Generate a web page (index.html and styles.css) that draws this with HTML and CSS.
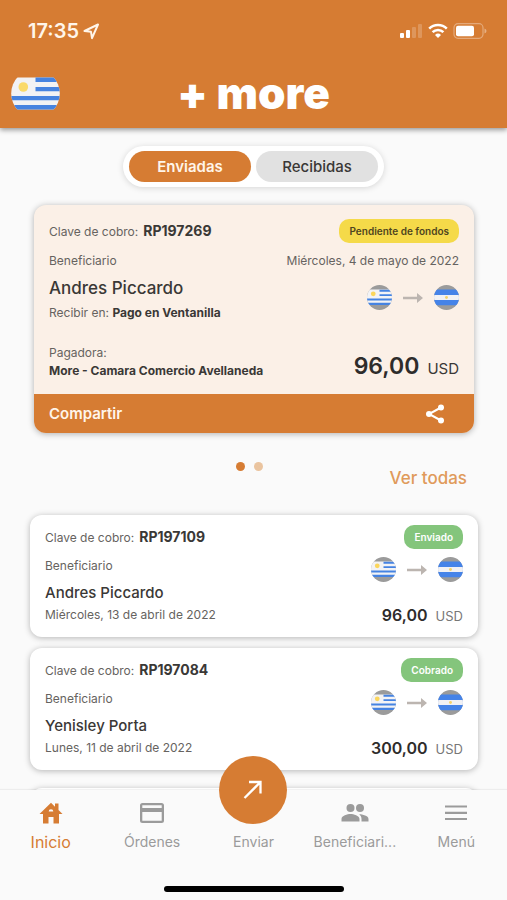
FILE: index.html
```html
<!DOCTYPE html>
<html lang="es">
<head>
<meta charset="utf-8">
<meta name="viewport" content="width=device-width, initial-scale=1">
<title>+ more</title>
<link rel="stylesheet" href="styles.css">
</head>
<body>
<svg class="defs" aria-hidden="true">
  <defs>
    <clipPath id="round"><circle cx="13" cy="13" r="13"/></clipPath>
    <symbol id="flag-uy" viewBox="0 0 26 26">
      <g clip-path="url(#round)">
        <path fill="#9b9b9b" d="M0 0h26v26H0z"/>
        <path fill="#f3f3f5" d="M0 4.700h26v16.200H0z"/>
        <path fill="#4583e2" d="M13 5h13v2H13zM13 9.500h13v2H13zM0 14h26v2.200H0zM0 18.500h26v2.300H0z"/>
        <circle cx="6.500" cy="9.200" r="2.500" fill="#fbd65c"/>
      </g>
    </symbol>
    <symbol id="flag-ar" viewBox="0 0 26 26">
      <g clip-path="url(#round)">
        <path fill="#9b9b9b" d="M0 0h26v26H0z"/>
        <path fill="#4583e8" d="M0 4.700h26v16.300H0z"/>
        <path fill="#f1f1f4" d="M0 10.500h26v5H0z"/>
        <circle cx="13" cy="13" r="1.500" fill="#f5d36b"/>
      </g>
    </symbol>
    <symbol id="arrow" viewBox="0 0 20 12">
      <path d="M0 4.800h14V1l6 5-6 5V7.200H0z" fill="currentColor"/>
    </symbol>
  </defs>
</svg>

<header class="header">
  <div class="status">
    <div class="status-time">17:35
      <svg width="17" height="17" viewBox="0 0 17 17" aria-hidden="true"><path d="M1.500 8 15 1.500 9 15.200 8 8.800z" fill="none" stroke="#fff5ea" stroke-width="2" stroke-linejoin="round"/></svg>
    </div>
    <div class="status-icons">
      <svg width="24" height="16" viewBox="0 0 24 16" aria-hidden="true"><g fill="#fff"><rect x="1" y="10" width="4" height="5" rx="1"/><rect x="7" y="7" width="4" height="8" rx="1"/><g opacity=".2"><rect x="13" y="4" width="4" height="11" rx="1"/><rect x="19" y="1" width="4" height="14" rx="1"/></g></g></svg>
      <svg width="20" height="16" viewBox="0 0 20 16" aria-hidden="true"><g fill="none" stroke="#fff" stroke-width="2.500"><path d="M1.200 5.600a12.500 12.500 0 0 1 17.600 0"/><path d="M4.600 9.200a7.600 7.600 0 0 1 10.800 0"/></g><path d="M10 15 7 12a4.300 4.300 0 0 1 6 0z" fill="#fff"/></svg>
      <svg width="34" height="16" viewBox="0 0 34 16" aria-hidden="true"><rect x="1" y=".7" width="29" height="14.600" rx="4" fill="none" stroke="#fff" stroke-opacity=".35" stroke-width="1.200"/><rect x="3" y="2.700" width="18" height="10.600" rx="2" fill="#fff"/><path d="M31.500 5.500q2 .8 2 2.500t-2 2.500z" fill="#fff" opacity=".4"/></svg>
    </div>
  </div>
  <div class="brand-row">
    <svg class="country" viewBox="0 0 49 33" role="img" aria-label="Uruguay">
      <clipPath id="country-clip"><circle cx="24.500" cy="16.500" r="24.300"/></clipPath>
      <g clip-path="url(#country-clip)">
        <path fill="#f2f2f4" d="M0 .5h49v32H0z"/>
        <path fill="#4683e0" d="M24.500.500H49v4.500H24.500zM24.500 10H49v4.300H24.500zM0 19h49v4.300H0zM0 28h49v4.500H0z"/>
        <circle cx="12.300" cy="10" r="4.800" fill="#fada6a"/>
      </g>
    </svg>
    <h1 class="brand">+ more</h1>
  </div>
</header>

<main class="main">
  <div class="toggle">
    <button class="toggle-btn active" type="button">Enviadas</button>
    <button class="toggle-btn" type="button">Recibidas</button>
  </div>

  <article class="feature">
    <div class="feature-body">
      <div class="row">
        <p class="key">Clave de cobro: <b>RP197269</b></p>
        <span class="badge pending">Pendiente de fondos</span>
      </div>
      <div class="row second">
        <p class="small">Beneficiario</p>
        <p class="small">Miércoles, 4 de mayo de 2022</p>
      </div>
      <div class="row third">
        <div>
          <h2 class="name">Andres Piccardo</h2>
          <p class="small">Recibir en: <b>Pago en Ventanilla</b></p>
        </div>
        <div class="route">
          <svg class="flag"><use href="#flag-uy"/></svg>
          <svg class="arrow"><use href="#arrow"/></svg>
          <svg class="flag"><use href="#flag-ar"/></svg>
        </div>
      </div>
      <div class="row fourth">
        <div>
          <p class="small">Pagadora:</p>
          <p class="small"><b>More - Camara Comercio Avellaneda</b></p>
        </div>
        <p class="amount"><strong>96,00</strong> <span>USD</span></p>
      </div>
    </div>
    <button class="share" type="button">Compartir
      <svg width="20" height="20" viewBox="0 0 20 20" aria-hidden="true"><path d="M16 3.500 4 10l12 6.500" fill="none" stroke="#fff" stroke-width="2"/><g fill="#fff"><circle cx="16" cy="3.500" r="3"/><circle cx="4" cy="10" r="3"/><circle cx="16" cy="16.500" r="3"/></g></svg>
    </button>
  </article>

  <div class="pager">
    <div class="dots"><span class="dot on"></span><span class="dot"></span></div>
    <a class="all" href="#todas">Ver todas</a>
  </div>

  <section class="list">
    <article class="item">
      <div class="row">
        <p class="key">Clave de cobro: <b>RP197109</b></p>
        <span class="badge done">Enviado</span>
      </div>
      <div class="row details">
        <div>
          <p class="small">Beneficiario</p>
          <h3 class="name">Andres Piccardo</h3>
          <p class="small">Miércoles, 13 de abril de 2022</p>
        </div>
        <div class="side">
          <div class="route">
            <svg class="flag"><use href="#flag-uy"/></svg>
            <svg class="arrow"><use href="#arrow"/></svg>
            <svg class="flag"><use href="#flag-ar"/></svg>
          </div>
          <p class="amount"><strong>96,00</strong> <span>USD</span></p>
        </div>
      </div>
    </article>
    <article class="item">
      <div class="row">
        <p class="key">Clave de cobro: <b>RP197084</b></p>
        <span class="badge done">Cobrado</span>
      </div>
      <div class="row details">
        <div>
          <p class="small">Beneficiario</p>
          <h3 class="name">Yenisley Porta</h3>
          <p class="small">Lunes, 11 de abril de 2022</p>
        </div>
        <div class="side">
          <div class="route">
            <svg class="flag"><use href="#flag-uy"/></svg>
            <svg class="arrow"><use href="#arrow"/></svg>
            <svg class="flag"><use href="#flag-ar"/></svg>
          </div>
          <p class="amount"><strong>300,00</strong> <span>USD</span></p>
        </div>
      </div>
    </article>
    <div class="item next"></div>
  </section>
</main>

<nav class="nav">
  <div class="tabs">
    <a class="tab current" href="#inicio">
      <svg width="24" height="24" viewBox="0 0 24 24" aria-hidden="true"><path d="M19.500 9V2.500H16v3.300L12 1.800.500 13H4v9.500h5.500V16h5v6.500H20V13h3.500zM9.700 10.500a2.300 2.300 0 0 1 4.600 0z" fill="currentColor" fill-rule="evenodd"/></svg>
      <span>Inicio</span>
    </a>
    <a class="tab" href="#ordenes">
      <svg width="26" height="24" viewBox="0 0 26 24" aria-hidden="true"><path d="M3.500 2h19A2.500 2.500 0 0 1 25 4.500v15a2.500 2.500 0 0 1-2.500 2.500h-19A2.500 2.500 0 0 1 1 19.500v-15A2.500 2.500 0 0 1 3.500 2zM3.300 4.300v2.700h19.400V4.300zM3.300 11v8.700h19.400V11z" fill="currentColor" fill-rule="evenodd"/></svg>
      <span>Órdenes</span>
    </a>
    <a class="tab send" href="#enviar">
      <span class="fab"><svg width="22" height="22" viewBox="0 0 22 22" aria-hidden="true"><path d="M2.500 19 18 3.500M7 3h11.500v11.500" fill="none" stroke="#fff" stroke-width="2.300"/></svg></span>
      <span>Enviar</span>
    </a>
    <a class="tab" href="#beneficiarios">
      <svg width="28" height="24" viewBox="0 0 28 24" aria-hidden="true"><g fill="currentColor"><circle cx="9.500" cy="7" r="4"/><circle cx="19" cy="7" r="4"/><path d="M.500 20.500v-2.500c0-3.300 6-5 9-5s9 1.700 9 5v2.500zM20.500 20.500v-2.500c0-2-.900-3.500-2.300-4.700 3.200 0 9.300 1.500 9.300 4.700v2.500z"/></g></svg>
      <span>Beneficiari...</span>
    </a>
    <a class="tab" href="#menu">
      <svg width="24" height="24" viewBox="0 0 24 24" aria-hidden="true"><path d="M1 5.500h22M1 11.800h22M1 18h22" stroke="currentColor" stroke-width="2.200"/></svg>
      <span>Menú</span>
    </a>
  </div>
  <div class="home-bar"></div>
</nav>
</body>
</html>
```
FILE: styles.css
```css
:root {
  --orange: #d67c33;
  --ink: #3a3836;
  --soft: #666360;
  --grey: #9b9b9b;
}

* { box-sizing: border-box; }

body {
  margin: 0;
  height: 100vh;
  display: flex;
  flex-direction: column;
  overflow: hidden;
  background: #fafafa;
  color: var(--ink);
  font-family: Inter, "Liberation Sans", sans-serif;
}

h1, h2, h3, p { margin: 0; }
svg { display: block; flex: none; }
a { text-decoration: none; }
button { border: 0; font: inherit; cursor: pointer; }
b { font-weight: 700; color: var(--ink); }
.defs { position: absolute; width: 0; height: 0; }

/* Header */
.header {
  position: relative;
  z-index: 1;
  flex: none;
  background: var(--orange);
  box-shadow: 0 2px 5px rgba(0, 0, 0, .4);
}

.status {
  height: 62px;
  padding: 0 20px 0 28px;
  display: flex;
  align-items: center;
  justify-content: space-between;
  color: #fff5ea;
}

.status-time {
  display: flex;
  align-items: center;
  gap: 4px;
  font-size: 20px;
  font-weight: 600;
}

.status-icons { display: flex; gap: 5px; }

.brand-row {
  height: 66px;
  padding: 0 11px 4px;
  display: grid;
  grid-template-columns: 1fr auto 1fr;
  align-items: center;
}

.country { width: 49px; height: 33px; }

.brand {
  color: #fff;
  font-size: 44px;
  line-height: 56px;
  font-weight: 900;
}

/* Main */
.main {
  flex: 1;
  min-height: 0;
  overflow: hidden;
}

.toggle {
  width: fit-content;
  margin: 18px auto;
  padding: 5px 6px;
  display: flex;
  gap: 5px;
  border-radius: 24px;
  background: #fff;
  box-shadow: 0 1px 6px rgba(0, 0, 0, .15);
}

.toggle-btn {
  width: 122px;
  height: 31px;
  padding: 0;
  border-radius: 16px;
  background: #e1e1e1;
  color: var(--ink);
  font-size: 15px;
  font-weight: 500;
}

.toggle-btn.active {
  background: var(--orange);
  color: #fff5ea;
  font-weight: 600;
}

.row {
  display: flex;
  align-items: center;
  justify-content: space-between;
}

.key {
  display: flex;
  align-items: baseline;
  gap: 5px;
  font-size: 12px;
  line-height: 20px;
  color: var(--soft);
}

.key b { font-size: 14px; }

.small {
  font-size: 12px;
  line-height: 18px;
  color: var(--soft);
}

.badge {
  padding: 0 10px;
  border-radius: 10px;
  font-size: 10px;
  line-height: 24px;
  font-weight: 600;
}

.badge.pending { background: #f5da49; color: #4e4520; }
.badge.done { background: #84c57c; color: #fff; }

.route { display: flex; align-items: center; gap: 11px; }
.flag { width: 25px; height: 25px; }
.arrow { width: 20px; height: 12px; color: #bcb5b0; }

.amount {
  display: flex;
  align-items: baseline;
  gap: 8px;
}

.amount strong { font-weight: 600; color: #2e2c2b; }

/* Featured transfer */
.feature {
  margin: 0 33px 0 34px;
  border-radius: 12px;
  overflow: hidden;
  background: #fbf0e7;
  box-shadow: 0 1px 6px rgba(0, 0, 0, .3);
}

.feature-body { padding: 14px 15px; }
.second { margin-top: 9px; }
.third { margin-top: 6px; align-items: flex-start; }
.third .route { padding-top: 9px; }
.fourth { margin-top: 22px; align-items: flex-end; }

.feature .name {
  margin-bottom: 4px;
  font-size: 17px;
  line-height: 24px;
  font-weight: 500;
}

.feature .amount { font-size: 15px; line-height: 22px; }
.feature .amount strong { font-size: 23px; }

.share {
  width: 100%;
  height: 39px;
  padding: 0 29px 0 15px;
  display: flex;
  align-items: center;
  justify-content: space-between;
  background: var(--orange);
  color: #fff5ea;
  font-size: 15px;
  font-weight: 600;
}

/* Pager */
.pager {
  height: 82px;
  padding: 29px 40px 0 32px;
  display: grid;
  grid-template-columns: 1fr auto 1fr;
}

.dots { grid-column: 2; display: flex; gap: 9px; }

.dot {
  width: 9px;
  height: 9px;
  border-radius: 50%;
  background: #eac49f;
}

.dot.on { background: var(--orange); }

.all {
  justify-self: end;
  padding-top: 4px;
  color: #e09a5b;
  font-size: 17px;
  line-height: 24px;
  font-weight: 500;
}

/* Transfer list */
.list {
  margin: 0 29px 0 30px;
  display: flex;
  flex-direction: column;
  gap: 11px;
}

.item {
  padding: 10px 15px 13px;
  border-radius: 12px;
  background: #fff;
  box-shadow: 0 1px 6px rgba(0, 0, 0, .28);
}

.item .details { margin-top: 8px; align-items: stretch; }

.item .name {
  margin: 7px 0 2px;
  font-size: 15px;
  line-height: 22px;
  font-weight: 500;
}

.side {
  display: flex;
  flex-direction: column;
  align-items: flex-end;
  justify-content: space-between;
}

.item .amount { font-size: 13px; line-height: 16px; color: #777; }
.item .amount strong { font-size: 16px; }
.item.next { height: 122px; margin-top: 7px; }

/* Bottom navigation */
.nav {
  position: relative;
  z-index: 1;
  flex: none;
  background: #fafafa;
  box-shadow: 0 -1px 1px rgba(0, 0, 0, .05);
}

.tabs {
  padding-top: 11px;
  display: grid;
  grid-template-columns: repeat(5, 1fr);
}

.tab {
  position: relative;
  display: flex;
  flex-direction: column;
  align-items: center;
  gap: 6px;
  color: var(--grey);
  font-size: 14px;
  line-height: 22px;
}

.tab.current { color: var(--orange); font-size: 16px; }
.tab.send { justify-content: flex-end; }

.fab {
  position: absolute;
  top: -45px;
  width: 68px;
  height: 68px;
  display: grid;
  place-items: center;
  border-radius: 50%;
  background: var(--orange);
}

.home-bar {
  width: 180px;
  height: 6px;
  margin: 33px auto 8px;
  border-radius: 3px;
  background: #000;
}
```
